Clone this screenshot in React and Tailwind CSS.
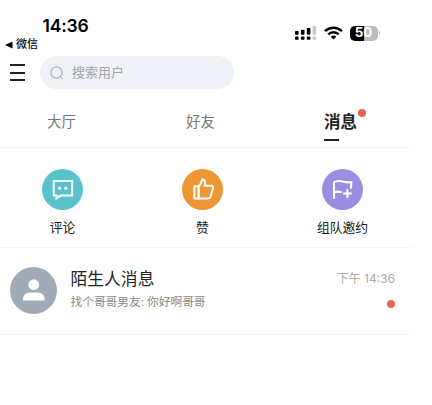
const TABS = [
  { name: '大厅', active: false },
  { name: '好友', active: false },
  { name: '消息', active: true },
];

const CommentIcon = () => (
  <svg width="41" height="41" viewBox="0 0 41 41" fill="none">
    <path d="M11.7 12h18.5v14.6H18.6l-4.1 3v-3h-2.8z" stroke="#fff" strokeWidth="2" />
    <circle cx="17.6" cy="19.3" r="1.7" fill="#fff" />
    <circle cx="23.9" cy="19.3" r="1.7" fill="#fff" />
  </svg>
);

const LikeIcon = () => (
  <svg width="41" height="41" viewBox="0 0 41 41" fill="none" stroke="#fff" strokeWidth="2" strokeLinejoin="round">
    <path d="M12.4 17.2h4.2v12.2h-4.2z" />
    <path d="M16.6 17.4c1.9-1.6 3-4 3.6-7.2 2 .4 3 1.5 2.9 3.4l-.3 3.2h6.2c1.6 0 2.3 1 2 2.3l-2.6 8.6c-.4 1.2-1 1.7-2.2 1.7h-9.6z" />
  </svg>
);

const TeamIcon = () => (
  <svg width="41" height="41" viewBox="0 0 41 41" fill="none" stroke="#fff" strokeWidth="2.1" strokeLinecap="round" strokeLinejoin="round">
    <path d="M12 29V13.2c3.2-1.6 6-1.3 8.6-.7 3 .8 5.8 1.1 8.9.6l-.6 5.9" />
    <path d="M12.4 23.4c2.2-1.1 4.3-1 6.6-.4" />
    <path d="M25.4 21v7M21.9 24.5h7" />
  </svg>
);

const SHORTCUTS = [
  { label: '评论', color: 'bg-[#58c3cc]', Icon: CommentIcon },
  { label: '赞', color: 'bg-[#ee9634]', Icon: LikeIcon },
  { label: '组队邀约', color: 'bg-[#9b8de2]', Icon: TeamIcon },
];

const SignalIcon = () => (
  <svg width="22" height="14" viewBox="0 0 22 14">
    <g fill="#000">
      <rect x="0" y="5" width="3.6" height="3.8" rx=".8" />
      <rect x="5.9" y="3.8" width="3.6" height="5" rx=".8" />
      <rect x="11.8" y="2" width="3.6" height="6.8" rx=".8" />
      <rect x="0" y="10.6" width="3.6" height="3.2" rx=".8" />
      <rect x="5.9" y="10.6" width="3.6" height="3.2" rx=".8" />
      <rect x="11.8" y="10.6" width="3.6" height="3.2" rx=".8" />
    </g>
    <g fill="#c9c9c9">
      <rect x="17.6" y="0" width="3.6" height="8.8" rx=".8" />
      <rect x="17.6" y="10.6" width="3.6" height="3.2" rx=".8" />
    </g>
  </svg>
);

const WifiIcon = () => (
  <svg width="19" height="14" viewBox="0 0 19 14" fill="none" stroke="#000" strokeWidth="2.5">
    <path d="M1 5.1a12.2 12.2 0 0 1 17 0" />
    <path d="M4.2 8.4a7.6 7.6 0 0 1 10.6 0" />
    <path d="M9.5 13.6 6.7 10.8a4 4 0 0 1 5.6 0z" fill="#000" stroke="none" />
  </svg>
);

const StatusBar = () => (
  <div className="flex h-[52px] justify-between">
    <div className="flex flex-col pl-[5px] pt-4">
      <span className="pl-[37.5px] font-[Inter] text-[17.5px] font-semibold leading-5 tracking-[-0.2px] text-black">14:36</span>
      <div className="flex items-center gap-[3px] pt-px text-[11px] font-medium leading-[15px] text-black">
        <svg width="8" height="8" viewBox="0 0 8 8">
          <path d="M0 4l7.5-3.6v7.2z" />
        </svg>
        微信
      </div>
    </div>
    <div className="mt-[25px] flex h-4 items-center pr-[52px]">
      <SignalIcon />
      <div className="pl-[7px]">
        <WifiIcon />
      </div>
      <div className="ml-[7px] flex h-[15px] w-7 items-center justify-center rounded-[5px] bg-linear-to-r from-black from-50% to-[#bcbcbc] to-50% font-[Inter] text-[13.5px] font-bold leading-none tracking-[-0.2px] text-white">
        50
      </div>
      <div className="ml-px h-1 w-[1.5px] rounded-r-full bg-[#bcbcbc]" />
    </div>
  </div>
);

const SearchBar = () => (
  <div className="flex items-center pl-[10px] pt-1">
    <div className="flex w-[15px] flex-col gap-[5.5px]">
      <div className="h-[2px] bg-[#222]" />
      <div className="h-[2px] bg-[#222]" />
      <div className="h-[2px] bg-[#222]" />
    </div>
    <div className="ml-[15px] flex h-[33px] w-[194px] items-center rounded-full bg-[#eff3f8] pl-[10px] text-[13px] text-[#a2a5aa]">
      <svg width="14" height="14" viewBox="0 0 14 14" fill="none" stroke="#b0b4b9" strokeWidth="1.2" strokeLinecap="round">
        <circle cx="6.5" cy="6.5" r="5.6" />
        <path d="M10.6 10.8l1.7 1.8" />
      </svg>
      <span className="pl-2">搜索用户</span>
    </div>
  </div>
);

const Tabs = () => (
  <div className="flex h-[59px] border-b border-[#f6f6f6]">
    {TABS.map((tab) => (
      <div key={tab.name} className={`flex w-[139px] shrink-0 flex-col pt-[21px] last:w-auto ${tab.active ? 'pl-[46px]' : 'pl-[47px]'}`}>
        <div className={`relative w-fit leading-6 ${tab.active ? 'text-[16.5px] font-bold text-[#222]' : 'text-[14.5px] text-[#777]'}`}>
          {tab.name}
          {tab.active && <span className="absolute -right-[9px] -top-px size-2 rounded-full bg-[#e2674d]" />}
        </div>
        {tab.active && <div className="mt-[5px] h-[2px] w-[15px] bg-[#222]" />}
      </div>
    ))}
  </div>
);

const Shortcuts = () => (
  <div className="flex h-[100px] border-b border-[#f6f6f6] pt-[21px]">
    {SHORTCUTS.map(({ label, color, Icon }) => (
      <div key={label} className="flex w-[140px] shrink-0 flex-col items-center pr-[15px]">
        <div className={`size-[41px] rounded-full ${color}`}>
          <Icon />
        </div>
        <span className="pt-2 text-[12.8px] leading-5 text-[#222]">{label}</span>
      </div>
    ))}
  </div>
);

const MessageRow = () => (
  <div className="flex h-[87px] border-b border-[#f6f6f6] pl-[10px] pt-[19px]">
    <div className="size-[47px] rounded-full bg-[#9fabb7]">
      <svg width="47" height="47" viewBox="0 0 47 47" fill="#fff">
        <circle cx="23.8" cy="17.7" r="5.4" />
        <path d="M13 33.4v-1.2c0-4.2 3.4-6.8 7.4-6.8h6.8c4 0 7.4 2.6 7.4 6.8v1.2z" />
      </svg>
    </div>
    <div className="flex-1 pl-[13.5px] pt-px">
      <div className="text-[16.8px] leading-6 text-[#222]">陌生人消息</div>
      <div className="text-[11.7px] leading-5 text-[#888]">找个哥哥男友: 你好啊哥哥</div>
    </div>
    <div className="flex flex-col items-end pr-[17px]">
      <span className="font-[Inter,'Noto_Sans_CJK_SC',sans-serif] text-[12px] leading-6 text-[#aaa]">下午 14:36</span>
      <span className="mt-[9px] size-2 rounded-full bg-[#e2674d]" />
    </div>
  </div>
);

const App = () => (
  <div className="h-[405px] w-[432px] bg-white font-['Liberation_Sans','Noto_Sans_CJK_SC',sans-serif]">
    <StatusBar />
    <div className="w-[412px]">
      <SearchBar />
      <Tabs />
      <Shortcuts />
      <MessageRow />
    </div>
  </div>
);

export default App;
